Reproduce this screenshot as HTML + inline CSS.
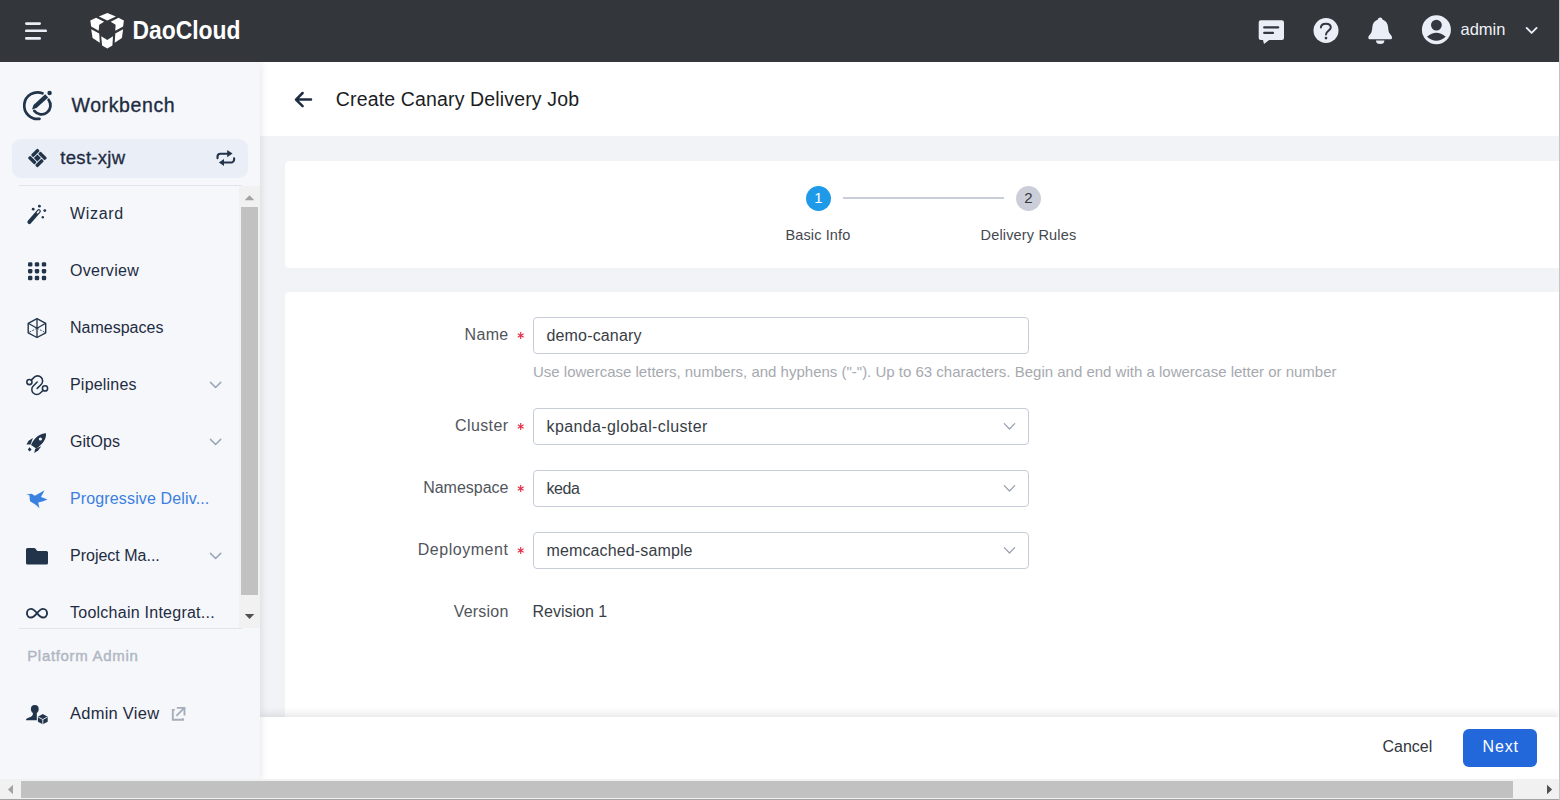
<!DOCTYPE html>
<html lang="en">
<head>
<meta charset="utf-8">
<title>Create Canary Delivery Job</title>
<style>
*{box-sizing:border-box;margin:0;padding:0}
html,body{width:1560px;height:800px;overflow:hidden;background:#f1f3f6;font-family:"Liberation Sans",sans-serif;color:#1e2c42}
#top{position:absolute;left:0;top:0;width:1560px;height:62px;background:#33363b;z-index:4}
#side{position:absolute;left:0;top:62px;width:260px;height:718px;background:#f6f7fb;box-shadow:1px 0 8px rgba(0,0,0,.10);z-index:3}
#main{position:absolute;left:260px;top:62px;width:1300px;height:718px;background:#f1f3f6;overflow:hidden}
#phead{position:absolute;left:0;top:0;width:1300px;height:74px;background:#fff}
#card1{position:absolute;left:25px;top:99px;width:1290px;height:107px;background:#fff;border-radius:4.5px}
#card2{position:absolute;left:25px;top:230px;width:1290px;height:500px;background:#fff;border-radius:4.5px}
#foot{position:absolute;left:0;top:655px;width:1300px;height:63px;background:#fff;box-shadow:0 -3px 8px rgba(0,0,0,.10)}
.t{position:absolute;white-space:nowrap;line-height:20px;height:20px}
.mi{position:absolute;left:70px;font-size:16px;color:#1e2c42;white-space:nowrap;line-height:20px;height:20px}
.lbl{position:absolute;left:100px;width:148.5px;font-size:16px;color:#51555c;white-space:nowrap;line-height:20px;height:20px;text-align:right}
.inp{position:absolute;left:273px;width:496px;height:37px;border:1px solid #c6ccd8;border-radius:4px;background:#fff;font-size:16px;line-height:35px;padding-left:12.5px;color:#383d45;white-space:nowrap}
.ast{position:absolute;left:256px;color:#e5334b;font-size:14px;line-height:20px;height:20px;font-weight:bold}
#hbar{position:absolute;left:0;top:779px;width:1560px;height:21px;background:#f1f1f1;z-index:5}
#hthumb{position:absolute;left:21px;top:2px;width:1492px;height:17px;background:#c1c1c1}
#hline{position:absolute;left:0;top:20px;width:1560px;height:1px;background:#a3a3a3}
#vline{position:absolute;left:1559px;top:0;width:1px;height:800px;background:#c4c4c4;z-index:6}
#sbtrack{position:absolute;left:239px;top:124px;width:21px;height:442px;background:#f1f1f1}
#sbthumb{position:absolute;left:2px;top:21px;width:17px;height:388px;background:#c1c1c1}
.hr{position:absolute;left:19px;width:223px;height:1px;background:#e1e5ed}
svg{position:absolute;left:0;top:0;overflow:visible;z-index:2}
</style>
</head>
<body>
<div id="top">
  <svg width="1560" height="62" viewBox="0 0 1560 62">
    <g fill="#e9eef7">
      <rect x="25" y="22.2" width="16" height="2.7" rx="1.3"/>
      <rect x="25" y="29.6" width="22" height="2.5" rx="1.2"/>
      <rect x="25" y="37.1" width="16" height="2.7" rx="1.3"/>
    </g>
    <g fill="#ffffff">
      <polygon points="107.3,12.9 115.9,16.6 107.3,20.6 98.9,16.6"/>
      <polygon points="90.3,20.4 96.1,17.8 104.1,21.8 99.2,24.7 98.7,30.7 91.2,26.4"/>
      <polygon points="123.9,20.4 118.5,17.8 110.7,21.8 115.6,24.7 115.3,30.7 123.1,26.4"/>
      <polygon points="91.2,29.3 99.2,33.6 99.8,42.8 92.6,37.9"/>
      <polygon points="123.1,29.3 115.3,33.6 114.7,42.8 121.9,37.9"/>
      <polygon points="101.2,36.2 107.3,39.9 113,36.2 112.4,45.4 107.3,48.5 102.1,45.4"/>
    </g>
    <text x="132.5" y="38.6" font-family="Liberation Sans, sans-serif" font-weight="bold" font-size="26.5" fill="#ffffff" textLength="108" lengthAdjust="spacingAndGlyphs">DaoCloud</text>
    <g fill="#e9eef7">
      <path d="M1260.8 20.3h21.1a2.1 2.1 0 0 1 2.1 2.1v15.5a2.1 2.1 0 0 1 -2.1 2.1h-12.7l-5.2 3.9l-1-3.9h-2.2a2.1 2.1 0 0 1 -2.1 -2.1v-15.5a2.1 2.1 0 0 1 2.1 -2.1z"/>
      <circle cx="1326" cy="30.5" r="12.5"/>
      <path d="M1380.2 17.6c1.3 0 2.1 .9 2.3 2c3.3 1.1 5.3 3.9 5.6 7.6c.3 3.4 .6 4.600 1.400 6.100c.7 1.2 2.700 2.700 2.600 4.400c0 .9 -.6 1.500 -1.700 1.500h-20.400c-1.100 0 -1.700 -.6 -1.700 -1.500c-.1 -1.700 1.900 -3.200 2.600 -4.400c.8 -1.500 1.100 -2.700 1.400 -6.100c.3 -3.700 2.300 -6.500 5.600 -7.600c.2 -1.100 1 -2 2.300 -2z"/>
      <path d="M1376 40.600h8.400a4.200 3.500 0 0 1 -8.400 0z"/>
      <circle cx="1436.400" cy="29.700" r="14.500"/>
    </g>
    <g fill="#33363c">
      <rect x="1263.100" y="26.300" width="16.200" height="2.200" rx="1.100"/>
      <rect x="1263.100" y="31.800" width="11" height="2.200" rx="1.100"/>
      <circle cx="1326" cy="38.100" r="1.350"/>
      <circle cx="1436.400" cy="25.100" r="5.400"/>
      <path d="M1427 36.700q9.400 -7.800 18.700 0q-9.300 8 -18.700 0z"/>
    </g>
    <path d="M1320.900 27.400c.3 -2.300 2.200 -3.600 5 -3.600c2.900 0 4.900 1.500 4.900 3.700c0 3 -4.800 3.600 -4.800 6.900" fill="none" stroke="#33363c" stroke-width="2" stroke-linecap="round"/>
    <path d="M1526.600 27.900l5 5l5 -5" fill="none" stroke="#e9eef7" stroke-width="1.900" stroke-linecap="round" stroke-linejoin="round"/>
  </svg>
  <div class="t" id="tx-admin" style="left:1460.5px;top:19px;font-size:16.5px;color:#eef1f7">admin</div>
</div>
<div id="main">
  <svg width="1300" height="718" viewBox="260 62 1300 718">
    <path d="M311 99.600H296.400M302.600 93L296 99.600L302.600 106.200" fill="none" stroke="#1e2c42" stroke-width="2.500" stroke-linecap="round" stroke-linejoin="round"/>
    <path d="M520.70 332.10L520.70 338.90M517.76 333.80L523.64 337.20M523.64 333.80L517.76 337.20M520.70 423.10L520.70 429.90M517.76 424.80L523.64 428.20M523.64 424.80L517.76 428.20M520.70 485.10L520.70 491.90M517.76 486.80L523.64 490.20M523.64 486.80L517.76 490.20M520.70 547.10L520.70 553.90M517.76 548.80L523.64 552.20M523.64 548.80L517.76 552.20" fill="none" stroke="#e5334b" stroke-width="1.150"/>
    <g fill="none" stroke="#98a1b0" stroke-width="1.250" stroke-linecap="round" stroke-linejoin="round">
      <path d="M1004.300 423.600l5.200 5.400l5.200 -5.400"/>
      <path d="M1004.300 485.600l5.200 5.400l5.200 -5.400"/>
      <path d="M1004.300 547.600l5.200 5.400l5.200 -5.400"/>
    </g>
  </svg>
  <div id="phead">
    <div class="t" id="tx-title" style="left:75.8px;top:25px;font-size:19.5px;line-height:24px;height:24px;color:#1c1d1f;letter-spacing:.15px">Create Canary Delivery Job</div>
  </div>
  <div id="card1">
    <div style="position:absolute;left:521px;top:25px;width:25px;height:25px;border-radius:50%;background:#1f9ae8;color:#fff;font-size:15px;line-height:24px;text-align:center">1</div>
    <div style="position:absolute;left:558px;top:36px;width:161px;height:2px;background:#c9cdd8"></div>
    <div style="position:absolute;left:731px;top:25px;width:25px;height:25px;border-radius:50%;background:#cbced8;color:#33363c;font-size:15px;line-height:24px;text-align:center">2</div>
    <div class="t" id="tx-s1" style="left:500.5px;top:64px;font-size:14.5px;color:#45484e;letter-spacing:.12px">Basic Info</div>
    <div class="t" id="tx-s2" style="left:695.5px;top:64px;font-size:14.5px;color:#45484e;letter-spacing:.17px">Delivery Rules</div>
  </div>
  <div id="card2"></div>
  <div class="lbl" id="lb-name" style="top:263px;letter-spacing:.3px">Name</div>
  <div class="inp" id="in-name" style="top:255px;letter-spacing:.16px">demo-canary</div>
  <div class="t" id="tx-help" style="left:273px;top:300px;font-size:15px;color:#a6a9af">Use lowercase letters, numbers, and hyphens ("-"). Up to 63 characters. Begin and end with a lowercase letter or number</div>
  <div class="lbl" id="lb-cluster" style="top:354px;letter-spacing:.4px">Cluster</div>
  <div class="inp" id="in-cluster" style="top:346px;letter-spacing:.39px">kpanda-global-cluster</div>
  <div class="lbl" id="lb-ns" style="top:416px">Namespace</div>
  <div class="inp" id="in-ns" style="top:408px;letter-spacing:-.4px">keda</div>
  <div class="lbl" id="lb-dep" style="top:478px;letter-spacing:.55px">Deployment</div>
  <div class="inp" id="in-dep" style="top:470px;letter-spacing:.13px">memcached-sample</div>
  <div class="lbl" id="lb-ver" style="top:540px;letter-spacing:.2px">Version</div>
  <div class="t" id="tx-rev" style="left:272.5px;top:540px;font-size:16px;color:#3a3f47">Revision 1</div>
  <div id="foot">
    <div class="t" id="tx-cancel" style="left:1122.5px;top:20px;font-size:16px;color:#33363c">Cancel</div>
    <div style="position:absolute;left:1203px;top:12px;width:74px;height:38px;border-radius:6px;background:#2368da"></div>
    <div class="t" id="tx-next" style="left:1222.6px;top:20px;font-size:16px;color:#fff;letter-spacing:.85px">Next</div>
  </div>
</div>
<div id="side">
  <svg width="260" height="718" viewBox="0 62 260 718">
    <!-- workbench -->
    <g fill="none" stroke="#21344a" stroke-width="2.700" stroke-linecap="round">
      <path d="M42.500 93.300A13.300 13.300 0 1 0 39.500 118.800"/>
      <path d="M48.600 99.800A9 9 0 0 1 34.300 110.900"/>
    </g>
    <g fill="#21344a">
      <circle cx="49.600" cy="93" r="2.200"/>
      <polygon points="48.20,97.41 45.20,94.19 33.50,104.89 32.00,109.40 36.50,108.11"/>
    </g>
    <!-- workspace diamond -->
    <g transform="translate(37.400 158) rotate(45)" fill="#21344a">
      <rect x="-2.500" y="-2.500" width="5" height="5"/>
      <rect x="-6.800" y="-6.800" width="3.400" height="9.300" rx=".900"/>
      <rect x="-6.800" y="3.400" width="9.300" height="3.400" rx=".900"/>
      <rect x="3.400" y="-2.500" width="3.400" height="9.300" rx=".900"/>
      <rect x="-2.500" y="-6.800" width="9.300" height="3.400" rx=".900"/>
    </g>
    <!-- swap -->
    <g fill="none" stroke="#21344a" stroke-width="2.100" stroke-linecap="round">
      <path d="M217.500 158.300v-1.600a3 3 0 0 1 3 -3h7"/>
      <path d="M234.100 158.200v1.300a3 3 0 0 1 -3 3h-7"/>
    </g>
    <g fill="#21344a">
      <polygon points="227.200,149.900 232.500,153.600 227.200,157.300"/>
      <polygon points="224,158.900 218.900,162.500 224,166.100"/>
    </g>
    <!-- wizard -->
    <path d="M29.300 222.100L38.900 211.100" stroke="#21344a" stroke-width="3.900" stroke-linecap="round" fill="none"/>
    <path d="M37.500 212.700L38.800 211.200" stroke="#f6f7fb" stroke-width="1.700" stroke-linecap="round" fill="none"/>
    <g fill="#21344a">
      <circle cx="33.200" cy="209.200" r="1.400"/><circle cx="39.400" cy="206.200" r="1.400"/><circle cx="44.800" cy="210.600" r="1.400"/><circle cx="42.800" cy="217.200" r="1.200"/>
    </g>
    <!-- overview -->
    <g fill="#21344a"><rect x="28.0" y="262.2" width="4.400" height="4.400" rx="1.300"/><rect x="34.8" y="262.2" width="4.400" height="4.400" rx="1.300"/><rect x="41.8" y="262.2" width="4.400" height="4.400" rx="1.300"/><rect x="28.0" y="269.0" width="4.400" height="4.400" rx="1.300"/><rect x="34.8" y="269.0" width="4.400" height="4.400" rx="1.300"/><rect x="41.8" y="269.0" width="4.400" height="4.400" rx="1.300"/><rect x="28.0" y="275.8" width="4.400" height="4.400" rx="1.300"/><rect x="34.8" y="275.8" width="4.400" height="4.400" rx="1.300"/><rect x="41.8" y="275.8" width="4.400" height="4.400" rx="1.300"/></g>
    <!-- namespaces -->
    <g fill="none" stroke="#21344a" stroke-width="1.400" stroke-linejoin="round">
      <polygon points="37,318.700 45.700,323.300 45.700,332.800 37,337.500 28.200,332.800 28.200,323.300"/>
      <path d="M28.200 323.300L37 328.200L45.700 323.300M37 318.700V337.500" stroke-width="1.300"/>
      <path d="M37 328.200L28.200 332.800M37 328.200L45.700 332.800" stroke-width="1" stroke-dasharray="2 1.300" opacity=".85"/>
    </g>
    <!-- pipelines -->
    <g fill="none" stroke="#21344a" stroke-width="1.550" stroke-linecap="round">
      <circle cx="29.400" cy="382" r="2.600"/><circle cx="45" cy="388.400" r="2.600"/>
      <path d="M31.300 380.100L34.060 377.360A5 5 0 0 1 41.140 384.440L37.200 388.400"/>
      <path d="M43.100 390.300L40.340 393.040A5 5 0 0 1 33.260 385.960L37.200 382"/>
    </g>
    <!-- gitops rocket -->
    <g fill="#21344a">
      <path d="M46 433.300C46.400 438.500 43.500 444 36.200 448.400L31 445.100C34 438 39.500 433.500 46 433.300z"/>
      <polygon points="26.500,444.600 28.600,440.800 32.900,438.100 30.600,444.400"/>
      <polygon points="34.200,453 38.200,450.400 41.200,446.200 35.200,448.800"/>
      <polygon points="29.600,447.200 31.600,449.500 29.600,451.500 27.800,449.500"/>
    </g>
    <circle cx="40.400" cy="439" r="1.600" fill="#f6f7fb"/>
    <!-- progressive delivery bird -->
    <polygon fill="#3b82e0" points="26.200,494.400 31.600,493.800 34.800,495.800 44.600,490.200 41,497 47.600,499.400 42.400,501.600 38.200,502.400 39.400,508.200 36,505 30,501.200 29.400,495.200"/>
    <!-- folder -->
    <path fill="#21344a" d="M27.500 548h6.700a1.500 1.500 0 0 1 1.100 .5l2 2.500h9.200a1.500 1.500 0 0 1 1.500 1.500v10.600a1.500 1.500 0 0 1 -1.500 1.500h-19a1.500 1.500 0 0 1 -1.500 -1.500v-13.600a1.500 1.500 0 0 1 1.500 -1.500z"/>
    <!-- infinity -->
    <path fill="none" stroke="#21344a" stroke-width="1.900" d="M37 613.200C34.300 609.700 32.500 608.900 31 608.900C28.600 608.900 26.950 610.800 26.950 613.200C26.950 615.600 28.600 617.500 31 617.500C32.500 617.500 34.300 616.700 37 613.200C39.700 609.700 41.500 608.900 43 608.900C45.400 608.900 47.050 610.800 47.050 613.200C47.050 615.600 45.400 617.500 43 617.500C41.500 617.500 39.700 616.700 37 613.200z"/>
    <!-- admin view -->
    <g fill="#21344a">
      <ellipse cx="34.800" cy="709.100" rx="3.900" ry="4.200"/>
      <path d="M32.900 711.500h3.900v8.800h-10.700c-.3 -1.300 .6 -1.900 2.400 -2.500c2.800 -1 4.200 -1.800 4.400 -3.700z"/>
      <polygon points="42.800,713.900 47.700,716.800 47.700,721.700 42.800,724.300 37.900,721.700 37.900,716.800"/>
    </g>
    <path d="M38.300 717.100L42.800 719.500L47.300 717.100M42.800 719.500V724" fill="none" stroke="#f6f7fb" stroke-width=".9"/>
    <!-- external link -->
    <g fill="none" stroke="#a6aebb" stroke-width="1.900">
      <path d="M174.700 709.900h-1.900v9.900h10.200v-1.600"/>
      <path d="M176.400 715.800L184.300 707.900M176.800 707.900h7.700v7.700"/>
    </g>
    <!-- chevrons -->
    <g fill="none" stroke="#9aa5b6" stroke-width="1.500" stroke-linecap="round" stroke-linejoin="round">
      <path d="M210.500 382.400l5.100 5.100l5.100 -5.100"/>
      <path d="M210.500 439.400l5.100 5.100l5.100 -5.100"/>
      <path d="M210.500 553.400l5.100 5.100l5.100 -5.100"/>
    </g>
    <!-- scrollbar arrows -->
    <polygon points="244.700,200.300 254.300,200.300 249.500,195.200" fill="#a3a3a3"/>
    <polygon points="244.800,613.900 254.300,613.900 249.550,619" fill="#505050"/>
  </svg>
  <div class="t" id="tx-wb" style="left:71.5px;top:31px;font-size:19.5px;line-height:24px;height:24px;letter-spacing:.6px;-webkit-text-stroke:.35px #1e2c42">Workbench</div>
  <div style="position:absolute;left:12px;top:77px;width:236px;height:39px;border-radius:9px;background:#eaeef6"></div>
  <div class="t" id="tx-ws" style="left:60.3px;top:86px;font-size:18.5px;letter-spacing:.3px;-webkit-text-stroke:.3px #1e2c42">test-xjw</div>
  <div class="hr" style="top:123px"></div>
  <div id="sbtrack"><div id="sbthumb"></div></div>
  <div class="mi" id="mi-1" style="top:142px;letter-spacing:0.66px">Wizard</div>
  <div class="mi" id="mi-2" style="top:199px;letter-spacing:0.3px">Overview</div>
  <div class="mi" id="mi-3" style="top:256px;letter-spacing:0px">Namespaces</div>
  <div class="mi" id="mi-4" style="top:313px;letter-spacing:0.2px">Pipelines</div>
  <div class="mi" id="mi-5" style="top:370px;letter-spacing:0.05px">GitOps</div>
  <div class="mi" id="mi-6" style="top:427px;letter-spacing:0.14px;color:#3b7fe0">Progressive Deliv...</div>
  <div class="mi" id="mi-7" style="top:484px;letter-spacing:0px">Project Ma...</div>
  <div class="mi" id="mi-8" style="top:541px;letter-spacing:0.25px">Toolchain Integrat...</div>
  <div class="hr" style="top:566px"></div>
  <div class="t" id="tx-pa" style="left:27.2px;top:584px;font-size:15px;color:#b0b7c3;letter-spacing:.68px;-webkit-text-stroke:.45px #b0b7c3">Platform Admin</div>
  <div class="mi" id="mi-9" style="top:641px;font-size:16.5px;letter-spacing:.25px">Admin View</div>
</div>
<div id="hbar"><svg width="1560" height="21" viewBox="0 779 1560 21"><polygon points="13,784.700 13,794.300 7.900,789.500" fill="#a3a3a3"/><polygon points="1547,784.700 1547,794.300 1552.100,789.500" fill="#505050"/></svg><div id="hthumb"></div><div id="hline"></div></div>
<div id="vline"></div>
</body>
</html>
